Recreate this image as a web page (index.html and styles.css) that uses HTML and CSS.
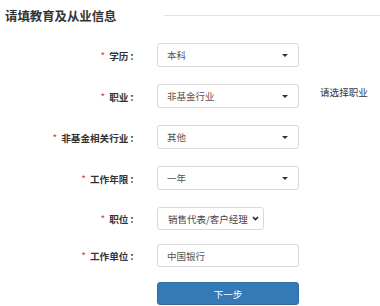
FILE: index.html
```html
<!DOCTYPE html>
<html lang="zh">
<head>
<meta charset="utf-8">
<link rel="stylesheet" href="styles.css">
</head>
<body>
<div class="page">
  <div class="head">
    <h1 class="title">请填教育及从业信息</h1>
    <div class="rule"></div>
  </div>
  <div class="form">
    <div class="row r1">
      <div class="label"><span class="req">*</span>学历<span class="colon">：</span></div>
      <div class="box select"><span>本科</span><span class="caret"></span></div>
    </div>
    <div class="row r2">
      <div class="label"><span class="req">*</span>职业<span class="colon">：</span></div>
      <div class="box select"><span>非基金行业</span><span class="caret"></span></div>
      <div class="hint">请选择职业</div>
    </div>
    <div class="row r3">
      <div class="label"><span class="req">*</span>非基金相关行业<span class="colon">：</span></div>
      <div class="box select"><span>其他</span><span class="caret"></span></div>
    </div>
    <div class="row r4">
      <div class="label"><span class="req">*</span>工作年限<span class="colon">：</span></div>
      <div class="box select"><span>一年</span><span class="caret"></span></div>
    </div>
    <div class="row r5">
      <div class="label"><span class="req">*</span>职位<span class="colon">：</span></div>
      <div class="box native"><span>销售代表/客户经理</span>
        <svg class="chev" width="7" height="5" viewBox="0 0 7 5"><path d="M1 1 L3.5 3.6 L6 1" fill="none" stroke="#222" stroke-width="1.6"/></svg>
      </div>
    </div>
    <div class="row r6">
      <div class="label"><span class="req">*</span>工作单位<span class="colon">：</span></div>
      <div class="box input">中国银行</div>
    </div>
    <div class="row r7">
      <div class="label"></div>
      <button class="btn">下一步</button>
    </div>
  </div>
</div>
</body>
</html>
```
FILE: styles.css
```css
html, body {
  margin: 0;
  padding: 0;
  background: #fff;
}
body {
  font-family: "Noto Sans CJK SC", "Noto Sans", sans-serif;
  color: #333;
}
.page {
  padding: 8px 0 0 5px;
}
.head {
  display: flex;
  align-items: center;
  height: 16px;
}
.title {
  margin: 0;
  font-size: 12.4px;
  font-weight: bold;
  color: #333;
  line-height: 16px;
  white-space: nowrap;
}
.rule {
  flex: 1;
  height: 1px;
  background: #e3e3e3;
  margin-left: 47px;
  margin-top: -1px;
}
.form {
  display: flex;
  flex-direction: column;
}
.row {
  display: flex;
  align-items: center;
}
.r1 { margin-top: 19px; }
.r2 { margin-top: 17px; }
.r3 { margin-top: 17px; }
.r4 { margin-top: 17px; }
.r5 { margin-top: 17px; }
.r6 { margin-top: 14px; }
.r7 { margin-top: 15px; }
.label {
  width: 133px;
  text-align: right;
  font-size: 9.6px;
  font-weight: bold;
  color: #333;
  white-space: nowrap;
  margin-right: 19px;
}
.colon {
  display: inline-block;
  width: 9.6px;
  text-align: center;
  text-indent: 1px;
}
.req {
  color: #e4393c;
  font-weight: normal;
  font-size: 10px;
  margin-right: 4px;
}
.box {
  box-sizing: border-box;
  width: 142px;
  height: 24px;
  border: 1px solid #d9d9d9;
  border-radius: 3px;
  font-size: 9.5px;
  color: #555;
  display: flex;
  align-items: center;
  padding: 0 10px 0 9px;
  background: #fff;
}
.select {
  justify-content: space-between;
}
.caret {
  width: 0;
  height: 0;
  border-left: 3px solid transparent;
  border-right: 3px solid transparent;
  border-top: 3px solid #333;
}
.native {
  width: 107px;
  height: 23px;
  padding: 0 4px 0 10px;
  justify-content: space-between;
  color: #444;
}
.chev {
  display: block;
}
.input {
  height: 23px;
}
.hint {
  font-size: 9.6px;
  color: #333;
  margin-left: 21px;
  margin-top: -8px;
}
.btn {
  box-sizing: border-box;
  width: 142px;
  height: 23px;
  border: 1px solid #2e6da4;
  border-radius: 3px;
  background: #337ab7;
  color: #fff;
  font-family: "Noto Sans CJK SC", "Noto Sans", sans-serif;
  font-size: 9.5px;
  padding: 0;
}
```
